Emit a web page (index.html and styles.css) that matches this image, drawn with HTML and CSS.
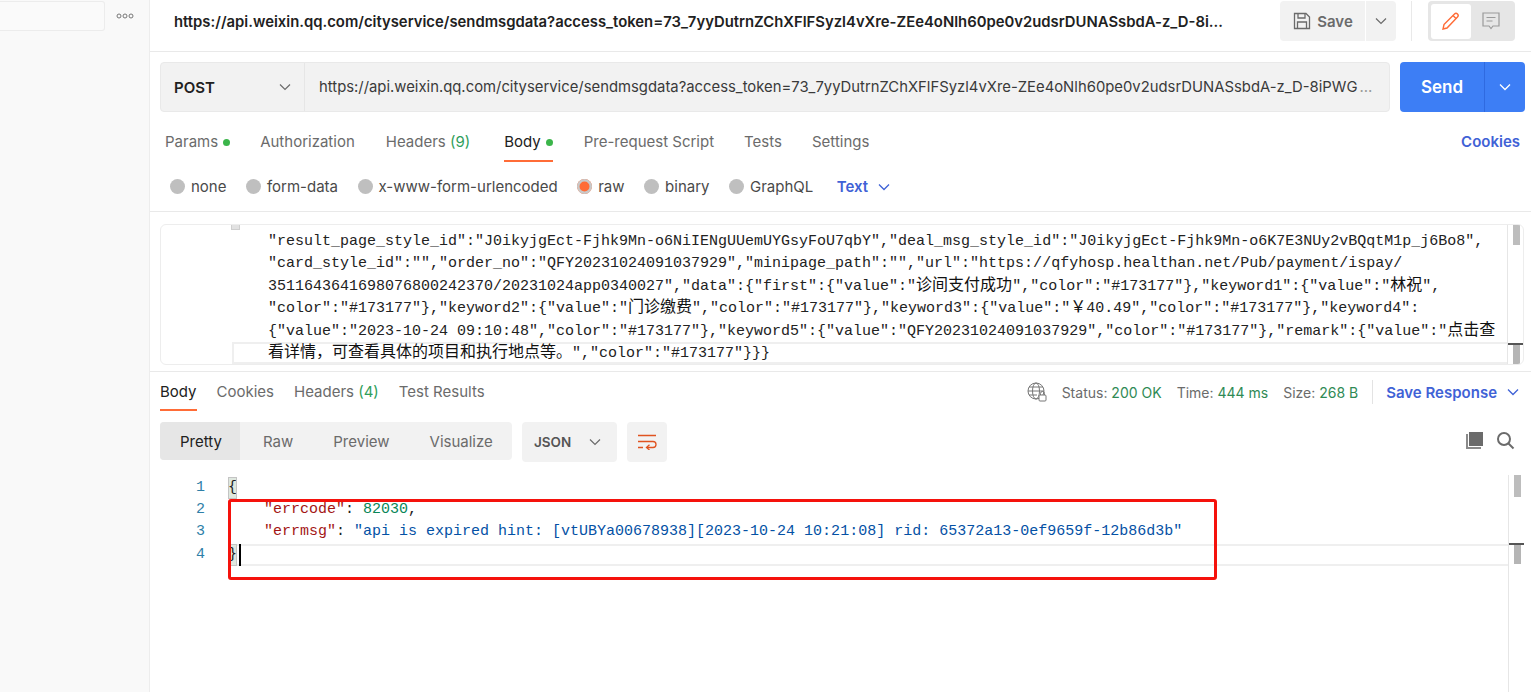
FILE: index.html
```html
<!DOCTYPE html>
<html lang="en">
<head>
<meta charset="utf-8">
<title>Postman request</title>
<link rel="stylesheet" href="styles.css">
</head>
<body>
<div class="app">
  <aside class="sidebar">
    <div class="side-top">
      <div class="side-search"></div>
      <svg class="side-dots" width="18" height="6" viewBox="0 0 18 6"><circle cx="3" cy="3" r="2"/><circle cx="9" cy="3" r="2"/><circle cx="15" cy="3" r="2"/></svg>
    </div>
  </aside>
  <main class="main">
    <header class="titlebar">
      <div class="title">https://api.weixin.qq.com/cityservice/sendmsgdata?access_token=73_7yyDutrnZChXFlFSyzl4vXre-ZEe4oNlh60pe0v2udsrDUNASsbdA-z_D-8i…</div>
      <button class="save-btn">
        <svg width="20" height="20" viewBox="0 0 20 20" fill="none" stroke="#6b6b6b" stroke-width="1.3"><path d="M2.5 2.5h11.5l3.5 3.5v11.5h-15z"/><path d="M6 2.5v4.5h7v-4.5"/><path d="M5.5 17.5v-6.5h9v6.5"/></svg>
        <span>Save</span>
      </button>
      <button class="save-arrow"><svg width="12" height="8" viewBox="0 0 12 8" fill="none" stroke="#6b6b6b" stroke-width="1.2"><path d="M1 1.5l5 5 5-5"/></svg></button>
      <span class="title-sep"></span>
      <div class="mode-toggle">
        <span class="mode-on"><svg width="20" height="20" viewBox="0 0 20 20" fill="none" stroke="#ff6c37" stroke-width="1.4"><path d="M3 13.5L13.5 3a2 2 0 0 1 3 3L6 17l-4 1z"/><path d="M12 4.5l3 3"/></svg></span>
        <span class="mode-off"><svg width="20" height="20" viewBox="0 0 20 20" fill="none" stroke="#9a9a9a" stroke-width="1.2"><path d="M2 2h16v13h-6l-2 2.5-2-2.5h-6z"/><path d="M5.500 6.500h9M5.500 10h6"/></svg></span>
      </div>
    </header>

    <section class="url-row">
      <div class="url-box">
        <div class="method"><span>POST</span><svg width="12" height="8" viewBox="0 0 12 8" fill="none" stroke="#6b6b6b" stroke-width="1.2"><path d="M1 1.500l5 5 5-5"/></svg></div>
        <div class="url-text">https://api.weixin.qq.com/cityservice/sendmsgdata?access_token=73_7yyDutrnZChXFlFSyzl4vXre-ZEe4oNlh60pe0v2udsrDUNASsbdA-z_D-8iPWG<span class="url-more">…</span></div>
      </div>
      <div class="send">
        <span class="send-label">Send</span>
        <span class="send-arrow"><svg width="12" height="8" viewBox="0 0 12 8" fill="none" stroke="#fff" stroke-width="1.3"><path d="M1 1.500l5 5 5-5"/></svg></span>
      </div>
    </section>

    <nav class="req-tabs">
      <span class="tab">Params<i class="dot"></i></span>
      <span class="tab">Authorization</span>
      <span class="tab tab-headers">Headers <em class="count">(9)</em></span>
      <span class="tab tab-active tab-body">Body<i class="dot"></i></span>
      <span class="tab">Pre-request Script</span>
      <span class="tab">Tests</span>
      <span class="tab">Settings</span>
      <span class="cookies">Cookies</span>
    </nav>

    <div class="body-types">
      <label class="radio"><i></i>none</label>
      <label class="radio"><i></i>form-data</label>
      <label class="radio"><i></i>x-www-form-urlencoded</label>
      <label class="radio radio-on"><i></i>raw</label>
      <label class="radio"><i></i>binary</label>
      <label class="radio"><i></i>GraphQL</label>
      <span class="lang">Text<svg width="12" height="8" viewBox="0 0 12 8" fill="none" stroke="#3f62d6" stroke-width="1.3"><path d="M1 1.500l5 5 5-5"/></svg></span>
    </div>

    <section class="req-editor">
      <div class="gutter"><span class="fold"></span></div>
      <div class="code">
        <div class="ln">"result_page_style_id":"J0ikyjgEct-Fjhk9Mn-o6NiIENgUUemUYGsyFoU7qbY","deal_msg_style_id":"J0ikyjgEct-Fjhk9Mn-o6K7E3NUy2vBQqtM1p_j6Bo8",</div>
        <div class="ln">"card_style_id":"","order_no":"QFY20231024091037929","minipage_path":"","url":"https://qfyhosp.healthan.net/Pub/payment/ispay/</div>
        <div class="ln">3511643641698076800242370/20231024app0340027","data":{"first":{"value":"<span class="cjk">诊间支付成功</span>","color":"#173177"},"keyword1":{"value":"<span class="cjk">林祝</span>",</div>
        <div class="ln">"color":"#173177"},"keyword2":{"value":"<span class="cjk">门诊缴费</span>","color":"#173177"},"keyword3":{"value":"<span class="cjk">￥</span>40.49","color":"#173177"},"keyword4":</div>
        <div class="ln">{"value":"2023-10-24 09:10:48","color":"#173177"},"keyword5":{"value":"QFY20231024091037929","color":"#173177"},"remark":{"value":"<span class="cjk">点击查</span></div>
        <div class="ln ln-active"><span class="cjk">看详情，可查看具体的项目和执行地点等。</span>","color":"#173177"}}}</div>
      </div>
      <div class="scroll"><span class="thumb"></span><span class="ruler ruler-req"></span></div>
    </section>

    <nav class="res-tabs">
      <span class="tab tab-active">Body</span>
      <span class="tab">Cookies</span>
      <span class="tab">Headers <em class="count">(4)</em></span>
      <span class="tab">Test Results</span>
      <div class="res-meta">
        <svg class="globe" width="20" height="20" viewBox="0 0 20 20" fill="none" stroke="#777" stroke-width="1"><circle cx="9" cy="9" r="8"/><ellipse cx="9" cy="9" rx="3.500" ry="8"/><path d="M1 9h16M2 5h14M2 13h8"/><rect x="12" y="13" width="7" height="6" rx="1" fill="#fff"/><path d="M13.500 13v-1.500a2 2 0 0 1 4 0v1.500"/></svg>
        <span>Status: <b>200 OK</b></span>
        <span>Time: <b>444 ms</b></span>
        <span>Size: <b>268 B</b></span>
        <i class="meta-sep"></i>
        <span class="save-res">Save Response<svg width="12" height="8" viewBox="0 0 12 8" fill="none" stroke="#3f62d6" stroke-width="1.3"><path d="M1 1.500l5 5 5-5"/></svg></span>
      </div>
    </nav>

    <div class="res-tools">
      <div class="segments">
        <span class="seg seg-on">Pretty</span>
        <span class="seg">Raw</span>
        <span class="seg">Preview</span>
        <span class="seg">Visualize</span>
      </div>
      <div class="json-select"><span>JSON</span><svg width="12" height="8" viewBox="0 0 12 8" fill="none" stroke="#6b6b6b" stroke-width="1.2"><path d="M1 1.500l5 5 5-5"/></svg></div>
      <div class="wrap-btn"><svg width="20" height="16" viewBox="0 0 20 16" fill="none" stroke="#e05320" stroke-width="1.300"><path d="M1 1.500h18M1 7.500h15a2.500 2.500 0 0 1 0 6h-6"/><path d="M12.500 10.800l-3 2.700 3 2.500M1 13.500h5"/></svg></div>
      <div class="tool-icons">
        <svg width="19" height="19" viewBox="0 0 19 19"><path d="M1 3h2v13h13v2H1z" fill="#8a8a8a"/><rect x="4" y="1" width="14" height="14" fill="#6b6b6b"/></svg>
        <svg width="19" height="19" viewBox="0 0 19 19" fill="none" stroke="#6b6b6b" stroke-width="2"><circle cx="8" cy="8" r="6"/><path d="M12.500 12.500l5 5"/></svg>
      </div>
    </div>

    <section class="res-editor">
      <div class="res-gutter"><div>1</div><div>2</div><div>3</div><div>4</div></div>
      <div class="code res-code">
        <div class="ln"><span class="match">{</span></div>
        <div class="ln">    <span class="key">"errcode"</span>: <span class="num">82030</span>,</div>
        <div class="ln">    <span class="key">"errmsg"</span>: <span class="str">"api is expired hint: [vtUBYa00678938][2023-10-24 10:21:08] rid: 65372a13-0ef9659f-12b86d3b"</span></div>
        <div class="ln ln-active"><span class="match">}</span><span class="caret"></span></div>
      </div>
      <div class="scroll"><span class="thumb thumb-res"></span><span class="ruler ruler-res"></span></div>
      <div class="callout"></div>
    </section>
  </main>
</div>
</body>
</html>
```
FILE: styles.css
```css
* { box-sizing: border-box; }
html, body { margin: 0; height: 100%; overflow: hidden; background: #fff; }
body { font-family: Inter, "Noto Sans", sans-serif; font-size: 15px; color: #6b6b6b; }
button { font: inherit; border: 0; padding: 0; color: inherit; }
svg { display: block; flex: none; }
.app { display: flex; width: 1531px; height: 692px; }

.sidebar { width: 150px; flex: none; background: #f9f9f9; border-right: 1px solid #ededed; }
.side-top { display: flex; align-items: center; padding-top: 1px; }
.side-search { width: 105px; height: 30px; background: #fafafa; border: 1px solid #ececec; border-left: 0; border-radius: 0 3px 3px 0; }
.side-dots { margin-left: 11px; fill: none; stroke: #777; stroke-width: 1; }

.main { flex: 1; min-width: 0; display: flex; flex-direction: column; }

.titlebar { height: 52px; flex: none; display: flex; align-items: flex-start; padding: 1px 16px 0 24px; border-bottom: 1px solid #e9e9e9; }
.title { width: 1056px; margin-top: 12px; font-size: 14.850px; font-weight: 600; line-height: 18px; color: #212121; white-space: nowrap; }
.save-btn { margin-left: 50px; width: 85px; height: 40px; display: flex; align-items: center; justify-content: center; gap: 5px; background: #f2f2f2; border-radius: 4px 0 0 4px; font-weight: 600; color: #6b6b6b; }
.save-arrow { margin-left: 1px; width: 30px; height: 40px; display: flex; align-items: center; justify-content: center; background: #f2f2f2; border-radius: 0 4px 4px 0; }
.title-sep { width: 1px; height: 40px; margin: 0 16px 0 15px; background: #e9e9e9; }
.mode-toggle { width: 87px; height: 40px; display: flex; align-items: center; padding: 0 3px; background: #e6e6e6; border-radius: 4px; }
.mode-on { width: 40px; height: 35px; display: flex; align-items: center; justify-content: center; background: #fff; border-radius: 3px; }
.mode-off { width: 40px; height: 35px; display: flex; align-items: center; justify-content: center; }

.url-row { flex: none; display: flex; gap: 10px; padding: 10px 6px 0 10px; }
.url-box { flex: 1; min-width: 0; height: 50px; display: flex; background: #f2f2f2; border: 1px solid #e9e9e9; border-radius: 4px; }
.method { width: 144px; flex: none; display: flex; align-items: center; justify-content: space-between; padding: 0 13px; border-right: 1px solid #e6e6e6; font-weight: 600; color: #212121; }
.url-text { flex: 1; min-width: 0; padding: 0 13px 0 14px; font-size: 14.850px; line-height: 48px; color: #3a3a3a; white-space: nowrap; }
.url-more { color: #9a9a9a; margin-left: 2px; }
.send { width: 125px; flex: none; height: 50px; display: flex; background: #3d7ef5; border-radius: 4px; color: #fff; }
.send-label { flex: 1; text-align: center; line-height: 50px; font-size: 17px; font-weight: 600; border-right: 1px solid #2f6ae0; }
.send-arrow { width: 40px; display: flex; align-items: center; justify-content: center; }

.req-tabs { flex: none; height: 50px; display: flex; align-items: flex-end; gap: 30px; padding: 0 11px 0 15px; }
.tab { position: relative; display: flex; align-items: center; height: 30px; padding-bottom: 10px; white-space: pre; line-height: 20px; color: #6b6b6b; }
.tab-headers { margin-left: 1px; }
.tab-body { margin: 0 1px 0 4px; }
.count { font-style: normal; color: #2f9e5b; }
.tab-active { color: #212121; }
.tab-active::after { content: ""; position: absolute; left: 0; right: 0; bottom: 0; height: 2px; background: #ff6c37; }
.dot { width: 7px; height: 7px; margin-left: 5px; border-radius: 50%; background: #3bb54a; }
.cookies { margin-left: auto; height: 30px; line-height: 20px; font-weight: 600; color: #3f62d6; }

.body-types { flex: none; height: 50px; display: flex; align-items: center; padding: 0 0 0 20px; border-bottom: 1px solid #e9e9e9; }
.radio { display: flex; align-items: center; gap: 6px; margin-right: 19.500px; color: #4a4a4a; }
.radio i { width: 15px; height: 15px; border-radius: 50%; background: #bfbfbf; }
.radio-on i { background: #ff6c37; box-shadow: inset 0 0 0 2.500px #c9c9c9; }
.lang { display: flex; align-items: center; gap: 10px; margin-left: 4px; font-weight: 600; color: #3f62d6; }

.code { flex: 1; min-width: 0; font-family: "Liberation Mono", "Noto Sans CJK SC", monospace; font-size: 15px; line-height: 22.400px; color: #222; }
.ln { height: 22.400px; padding-left: 36px; white-space: pre; }
.cjk { font-family: "Noto Sans CJK SC", sans-serif; font-size: 16px; line-height: 0; color: #111; }
.ln-active { box-shadow: inset 0 2px 0 #efefef, inset 0 -2px 0 #efefef, inset 2px 0 0 #efefef; }
.req-editor { flex: none; position: relative; height: 141px; margin: 12px 7px 0 10px; display: flex; border: 1px solid #ededed; border-radius: 6px; overflow: hidden; }
.req-editor .code { padding-top: 5px; line-height: 24px; }
.gutter { width: 71px; flex: none; position: relative; }
.fold { position: absolute; left: 70px; top: 0; width: 9px; height: 5px; background: #e2e2e2; border: 1px solid #cfcfcf; border-top: 0; }
.scroll { position: relative; width: 16px; flex: none; border-left: 1px solid #e6e6e6; }
.thumb { position: absolute; left: 5px; top: 0; width: 7px; height: 20px; background: #bdbdbd; }
.thumb-res { height: 22px; }
.ruler { position: absolute; left: 0; right: 0; height: 21px; border-top: 2px solid #555; }
.ruler::after { content: ""; position: absolute; left: 5px; top: 0; bottom: 0; width: 7px; background: #b5b5b5; }
.ruler-req { top: 118px; }
.ruler-res { top: 68px; }

.res-tabs { flex: none; height: 40px; display: flex; align-items: flex-end; gap: 20px; margin-top: 6px; padding: 0 10px; border-top: 1px solid #e9e9e9; }
.res-tabs .tab { padding-bottom: 9px; }
.res-meta { margin-left: auto; align-self: center; display: flex; align-items: center; gap: 15px; font-size: 14px; color: #6b6b6b; padding-top: 1px; }
.res-meta b { font-weight: 400; color: #2f8a55; }
.meta-sep { width: 1px; height: 24px; margin: 0 -2px 0 -1px; background: #e3e3e3; }
.save-res { display: flex; align-items: center; gap: 10px; padding-right: 2px; font-size: 15px; font-weight: 600; color: #3f62d6; }

.res-tools { flex: none; height: 64px; display: flex; align-items: flex-start; padding: 11px 16px 0 10px; }
.segments { width: 352px; height: 38px; display: flex; background: #f2f2f2; border-radius: 4px; overflow: hidden; }
.seg { line-height: 40px; padding: 0 20px; color: #6b6b6b; }
.seg-on { width: 80px; margin-right: 3px; background: #e6e6e6; color: #212121; }
.json-select { width: 95px; height: 40px; margin-left: 10px; display: flex; align-items: center; justify-content: space-between; padding: 0 16px 0 12px; background: #f2f2f2; border-radius: 4px; font-weight: 600; font-size: 13.500px; color: #555; }
.wrap-btn { width: 40px; height: 40px; margin-left: 10px; display: flex; align-items: center; justify-content: center; background: #f2f2f2; border-radius: 4px; }
.tool-icons { margin-left: auto; padding-top: 9px; display: flex; gap: 12px; }

.res-editor { flex: 1; position: relative; display: flex; min-height: 0; padding-right: 7px; }
.res-gutter { width: 55px; flex: none; padding-top: 1.500px; text-align: right; font-family: "Liberation Mono", monospace; font-size: 15px; line-height: 22.400px; color: #2f7fa8; }
.res-code { margin-left: 23px; padding-top: 1.500px; }
.res-code .ln { padding-left: 0; }
.res-code .ln-active { display: flex; }
.match { display: inline-block; background: #dfe8df; outline: 1px solid #c4c4c4; outline-offset: -1px; }
.caret { display: inline-block; width: 2px; height: 22px; margin-left: 2px; background: #000; }
.key { color: #a31515; }
.num { color: #098658; }
.str { color: #0451a5; }
.callout { position: absolute; left: 78px; top: 24px; width: 989px; height: 81px; border: 3.500px solid #f5120c; border-radius: 3px; pointer-events: none; }
```
